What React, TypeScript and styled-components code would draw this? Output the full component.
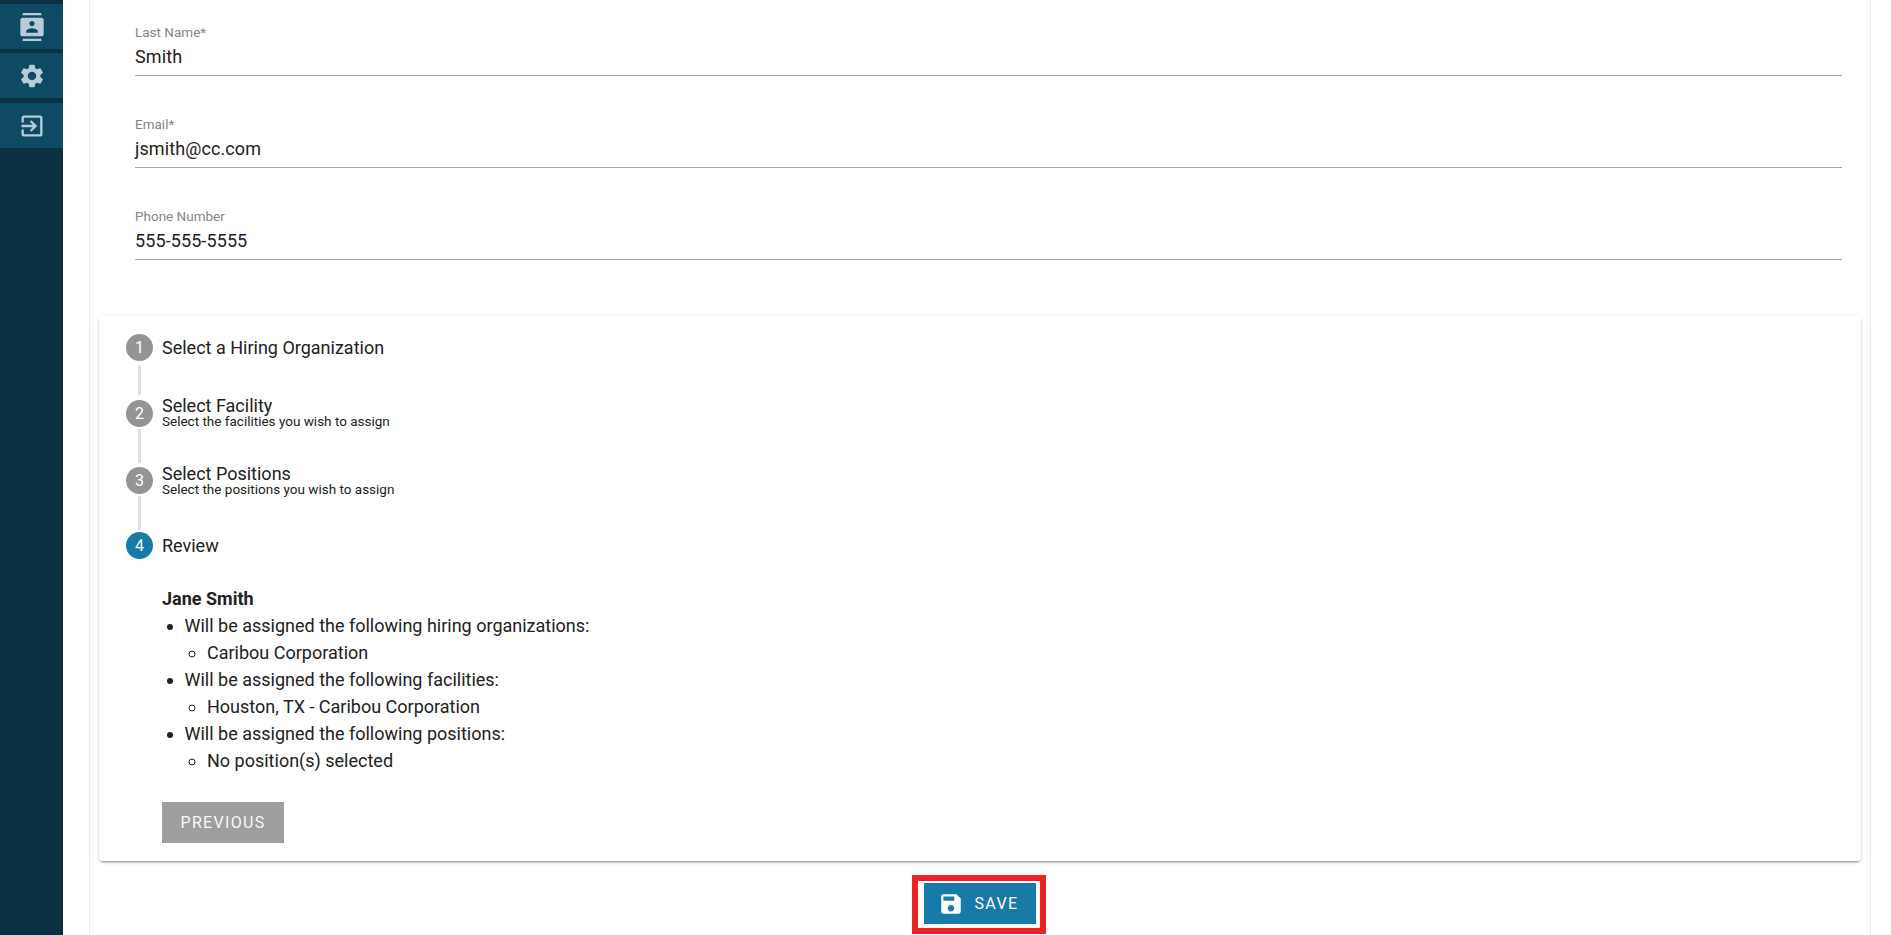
import React from 'react';
import styled, { createGlobalStyle } from 'styled-components';
import { MdContacts, MdSettings, MdExitToApp, MdSave } from 'react-icons/md';

const GlobalStyle = createGlobalStyle`
    html, body {
        margin: 0;
        padding: 0;
        height: 100%;
        overflow: hidden;
        background: #fff;
        font-family: Roboto, "Liberation Sans", sans-serif;
        color: #212121;
    }
`;

const Page = styled.div`
    display: flex;
    width: 1891px;
    height: 935px;
    overflow: hidden;
`;

const Sidebar = styled.nav`
    flex: 0 0 63px;
    display: flex;
    flex-direction: column;
    gap: 4px;
    padding-top: 4px;
    box-sizing: border-box;
    background: #0a3042;
`;

const NavItem = styled.div`
    height: 45px;
    display: flex;
    align-items: center;
    justify-content: center;
    background: #0f4a64;
    color: #b7ccd7;
    font-size: 28px;
    &:last-child {
        margin-top: 1px;
    }
`;

const Gutter = styled.div`
    flex: 0 0 26px;
`;

const Panel = styled.main`
    width: 1782px;
    height: 935px;
    box-sizing: border-box;
    padding: 0 9px 0 9px;
    border-left: 1px solid #ececec;
    border-right: 1px solid #ececec;
    background: #fff;
`;

const Fields = styled.div`
    padding: 23px 19px 0 36px;
`;

const Field = styled.div`
    height: 92px;
    box-sizing: border-box;
`;

const FieldLabel = styled.div`
    font-size: 13.5px;
    line-height: 18px;
    color: #858585;
`;

const FieldValue = styled.div`
    font-size: 18px;
    line-height: 24px;
    height: 35px;
    padding-top: 4px;
    box-sizing: border-box;
    letter-spacing: 0.1px;
    border-bottom: 1px solid #a8a8a8;
    color: #212121;
`;

const Card = styled.section`
    margin-top: 17px;
    height: 545px;
    box-sizing: border-box;
    padding: 18px 27px 0 27px;
    background: #fff;
    border-radius: 4px;
    box-shadow: 0 3px 1px -2px rgba(0, 0, 0, 0.2), 0 2px 2px 0 rgba(0, 0, 0, 0.14), 0 1px 5px 0 rgba(0, 0, 0, 0.12);
`;

const StepRow = styled.div<{ $height: number }>`
    display: flex;
    height: ${p => p.$height}px;
    gap: 9px;
`;

const StepRail = styled.div`
    flex: 0 0 27px;
    display: flex;
    flex-direction: column;
    align-items: center;
`;

const StepCircle = styled.div<{ $active?: boolean }>`
    flex: 0 0 27px;
    width: 27px;
    border-radius: 50%;
    display: flex;
    align-items: center;
    justify-content: center;
    font-size: 16px;
    color: #fff;
    background: ${p => (p.$active ? '#187aa6' : '#949494')};
`;

const StepLine = styled.div<{ $before: number; $after: number }>`
    flex: 1;
    width: 3px;
    margin: ${p => p.$before}px 0 ${p => p.$after}px;
    background: #dedede;
`;

const StepText = styled.div<{ $top: number }>`
    margin-top: ${p => p.$top}px;
`;

const StepTitle = styled.div`
    font-size: 18px;
    line-height: 21px;
    color: #212121;
`;

const StepHint = styled.div`
    font-size: 13.5px;
    line-height: 13px;
    margin-top: -1px;
    color: #212121;
`;

const Review = styled.div`
    padding: 26px 0 0 36px;
    font-size: 18px;
    line-height: 27px;
`;

const ReviewName = styled.div`
    font-weight: 700;
`;

const OuterList = styled.ul`
    margin: 0;
    padding: 0 0 0 22.5px;
    list-style: disc;
`;

const InnerList = styled.ul`
    margin: 0;
    padding: 0 0 0 22.5px;
    list-style: circle;
`;

const PreviousButton = styled.button`
    display: block;
    margin-top: 28px;
    width: 122px;
    height: 41px;
    border: 0;
    border-radius: 0;
    background: #9e9e9e;
    color: #f8f8f8;
    font-family: inherit;
    font-size: 16px;
    font-weight: 400;
    letter-spacing: 1.3px;
    text-transform: uppercase;
`;

const SaveRow = styled.div`
    display: flex;
    justify-content: center;
    margin-top: 14px;
    padding-right: 2px;
`;

const SaveFrame = styled.div`
    border: 6px solid #ec2227;
    background: #fff;
    padding: 2px 4px 4px 6px;
`;

const SaveButton = styled.button`
    width: 112px;
    height: 41px;
    border: 0;
    display: flex;
    align-items: center;
    justify-content: center;
    gap: 10px;
    padding: 0 3px 0 0;
    background: #187aa6;
    color: #fff;
    font-family: inherit;
    font-size: 16px;
    font-weight: 400;
    letter-spacing: 1.4px;
    svg {
        font-size: 26px;
    }
`;

const fields = [
	{ label: 'Last Name*', value: 'Smith' },
	{ label: 'Email*', value: 'jsmith@cc.com' },
	{ label: 'Phone Number', value: '555-555-5555' },
];

const steps = [
	{ n: 1, title: 'Select a Hiring Organization', height: 66, before: 5, after: 5, top: 3 },
	{ n: 2, title: 'Select Facility', hint: 'Select the facilities you wish to assign', height: 67, before: 2, after: 4, top: -5 },
	{ n: 3, title: 'Select Positions', hint: 'Select the positions you wish to assign', height: 65, before: 2, after: 2, top: -4 },
];

const review = [
	{ text: 'Will be assigned the following hiring organizations:', item: 'Caribou Corporation' },
	{ text: 'Will be assigned the following facilities:', item: 'Houston, TX - Caribou Corporation' },
	{ text: 'Will be assigned the following positions:', item: 'No position(s) selected' },
];

const App: React.FC = () => {
	return (
		<Page>
			<GlobalStyle />
			<Sidebar>
				<NavItem><MdContacts /></NavItem>
				<NavItem><MdSettings /></NavItem>
				<NavItem><MdExitToApp /></NavItem>
			</Sidebar>
			<Gutter />
			<Panel>
				<Fields>
					{fields.map(f => (
						<Field key={f.label}>
							<FieldLabel>{f.label}</FieldLabel>
							<FieldValue>{f.value}</FieldValue>
						</Field>
					))}
				</Fields>
				<Card>
					{steps.map(s => (
						<StepRow key={s.n} $height={s.height}>
							<StepRail>
								<StepCircle>{s.n}</StepCircle>
								<StepLine $before={s.before} $after={s.after} />
							</StepRail>
							<StepText $top={s.top}>
								<StepTitle>{s.title}</StepTitle>
								{s.hint && <StepHint>{s.hint}</StepHint>}
							</StepText>
						</StepRow>
					))}
					<StepRow $height={27}>
						<StepRail>
							<StepCircle $active>4</StepCircle>
						</StepRail>
						<StepText $top={3}>
							<StepTitle>Review</StepTitle>
						</StepText>
					</StepRow>
					<Review>
						<ReviewName>Jane Smith</ReviewName>
						<OuterList>
							{review.map(r => (
								<li key={r.text}>
									{r.text}
									<InnerList>
										<li>{r.item}</li>
									</InnerList>
								</li>
							))}
						</OuterList>
						<PreviousButton>Previous</PreviousButton>
					</Review>
				</Card>
				<SaveRow>
					<SaveFrame>
						<SaveButton><MdSave />SAVE</SaveButton>
					</SaveFrame>
				</SaveRow>
			</Panel>
		</Page>
	);
};

export default App;
